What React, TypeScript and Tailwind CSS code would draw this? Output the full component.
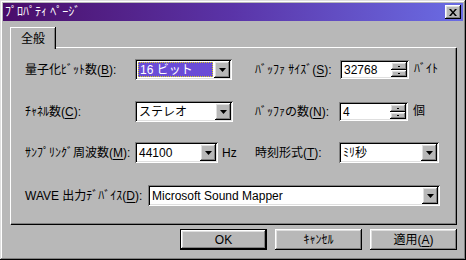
import React from "react";

const raised =
  "shadow-[inset_-1px_-1px_#000,inset_1px_1px_#fff,inset_-2px_-2px_#808080,inset_2px_2px_#dfdfdf]";
const sunken =
  "shadow-[inset_1px_1px_#808080,inset_-1px_-1px_#fff,inset_2px_2px_#000,inset_-2px_-2px_#dfdfdf]";

function DownArrow() {
  return (
    <svg width="7" height="4" viewBox="0 0 7 4">
      <path d="M0 0h7L3.5 4z" fill="#000" />
    </svg>
  );
}

function Combo({
  value,
  width,
  selected = false,
}: {
  value: string;
  width: string;
  selected?: boolean;
}) {
  return (
    <div className={`flex h-[21px] bg-white p-[2px] ${sunken} ${width}`}>
      <div className="flex flex-1 items-center pl-[1px] pr-[1px]">
        {selected ? (
          <span className="flex h-[15px] w-full items-center border border-dotted border-[#d8d020] bg-[#6a4cd6] pl-[1px] text-white">
            {value}
          </span>
        ) : (
          <span className="pl-[1px]">{value}</span>
        )}
      </div>
      <div className={`flex h-[17px] w-[16px] items-center justify-center bg-[#b8b8b8] ${raised}`}>
        <DownArrow />
      </div>
    </div>
  );
}

function Spin({ value }: { value: string }) {
  return (
    <div className={`flex h-[19px] w-[69px] self-start bg-white p-[2px] ${sunken}`}>
      <span className="flex flex-1 items-center pl-[2px]">{value}</span>
      <div className="flex w-[16px] flex-col">
        <div className={`flex h-[8px] items-center justify-center bg-[#b8b8b8] ${raised}`}>
          <div className="h-[1px] w-[2px] bg-black" />
        </div>
        <div className={`flex h-[7px] items-center justify-center bg-[#b8b8b8] ${raised}`}>
          <div className="h-[1px] w-[2px] bg-black" />
        </div>
      </div>
    </div>
  );
}

function Label({ text, accel, width }: { text: string; accel: string; width: string }) {
  return (
    <span className={`whitespace-nowrap ${width}`}>
      {text}(<span className="underline underline-offset-2">{accel}</span>):
    </span>
  );
}

function Button({ children, primary = false }: { children: React.ReactNode; primary?: boolean }) {
  return (
    <div className={`h-[21px] w-[87px] ${primary ? "border border-black" : ""}`}>
      <div className={`flex h-full w-full items-center justify-center bg-[#b8b8b8] ${raised}`}>
        {children}
      </div>
    </div>
  );
}

export default function App() {
  return (
    <div
      className={`flex h-[260px] w-[466px] flex-col bg-[#b8b8b8] p-[3px] text-[12px] leading-none text-black font-['Liberation_Sans','Noto_Sans_CJK_JP',sans-serif] shadow-[inset_-1px_-1px_#000,inset_1px_1px_#dfdfdf,inset_-2px_-2px_#808080,inset_2px_2px_#fff]`}
    >
      {/* title bar */}
      <div className="flex h-[18px] items-center justify-between bg-linear-to-r from-[#4a0c6a] via-[#5a34a8] to-[#6a6ce4] pl-[2px] pr-[2px]">
        <span className="text-white">ﾌﾟﾛﾊﾟﾃｨ ﾍﾟｰｼﾞ</span>
        <div className={`flex h-[14px] w-[16px] items-center justify-center bg-[#b8b8b8] ${raised}`}>
          <svg width="8" height="7" viewBox="0 0 8 7">
            <path d="M0 0h2l2 2.5L6 0h2L5 3.5 8 7H6L4 4.5 2 7H0l3-3.5z" fill="#000" />
          </svg>
        </div>
      </div>

      {/* tab strip */}
      <div className="mt-[6px] flex px-[7px]">
        <div className="relative z-10 -mb-[2px] flex h-[22px] w-[45px] items-start justify-center border-l border-t border-white pt-[5px] shadow-[inset_-1px_0_#808080,1px_0_#000] bg-[#b8b8b8]">
          <span>全般</span>
        </div>
      </div>

      {/* tab panel */}
      <div className="mx-[7px] flex h-[177px] flex-col border-l border-t border-white pl-[14px] pt-[11px] shadow-[inset_-1px_-1px_#808080,1px_1px_#000]">
        <div className="flex h-[21px] items-center">
          <div className="flex w-[230px] items-center">
            <Label text="量子化ﾋﾞｯﾄ数" accel="B" width="w-[110px]" />
            <Combo value="16 ビット" width="w-[97px]" selected />
          </div>
          <div className="flex items-center">
            <Label text="ﾊﾞｯﾌｧ ｻｲｽﾞ" accel="S" width="w-[85px]" />
            <Spin value="32768" />
            <span className="ml-[5px] self-start pt-[3px]">ﾊﾞｲﾄ</span>
          </div>
        </div>

        <div className="mt-[21px] flex h-[21px] items-center">
          <div className="flex w-[230px] items-center">
            <Label text="ﾁｬﾈﾙ数" accel="C" width="w-[110px]" />
            <Combo value="ステレオ" width="w-[98px]" />
          </div>
          <div className="flex items-center">
            <Label text="ﾊﾞｯﾌｧの数" accel="N" width="w-[84px]" />
            <Spin value="4" />
            <span className="ml-[5px] self-start pt-[3px]">個</span>
          </div>
        </div>

        <div className="mt-[20px] flex h-[21px] items-center">
          <div className="flex w-[230px] items-center">
            <Label text="ｻﾝﾌﾟﾘﾝｸﾞ周波数" accel="M" width="w-[110px]" />
            <Combo value="44100" width="w-[83px]" />
            <span className="ml-[4px]">Hz</span>
          </div>
          <div className="flex items-center">
            <Label text="時刻形式" accel="T" width="w-[84px]" />
            <Combo value="ﾐﾘ秒" width="w-[100px]" />
          </div>
        </div>

        <div className="mt-[22px] flex h-[21px] items-center">
          <Label text="WAVE 出力ﾃﾞﾊﾞｲｽ" accel="D" width="w-[123px]" />
          <Combo value="Microsoft Sound Mapper" width="w-[292px]" />
        </div>
      </div>

      {/* buttons */}
      <div className="mt-[5px] flex justify-end gap-[8px] pr-[6px]">
        <Button primary>OK</Button>
        <Button>ｷｬﾝｾﾙ</Button>
        <Button>
          <span>
            適用(<span className="underline underline-offset-2">A</span>)
          </span>
        </Button>
      </div>
    </div>
  );
}
